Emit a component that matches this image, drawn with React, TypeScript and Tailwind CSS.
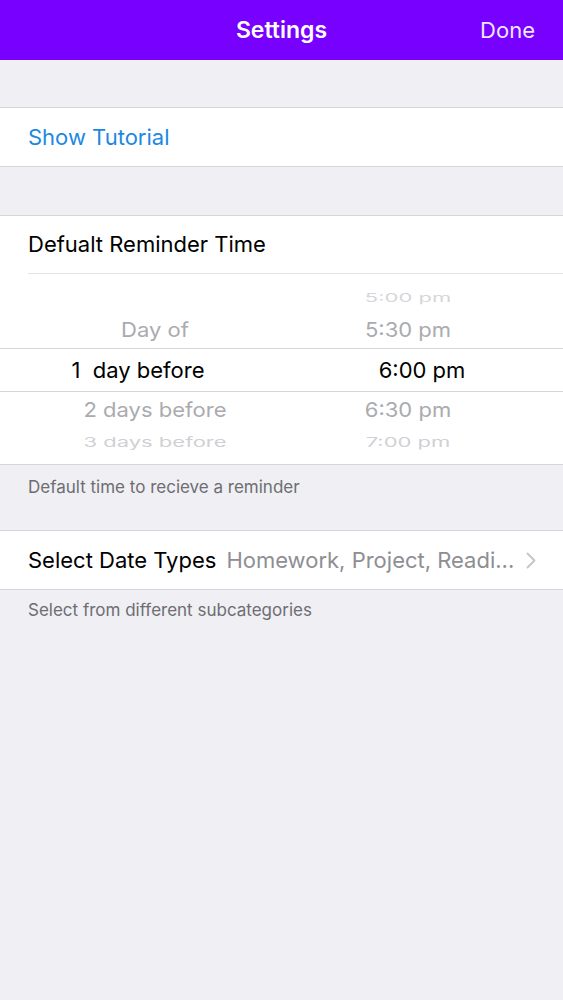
import React from 'react';

const font = { fontFamily: 'Inter, "Noto Sans", sans-serif' };

function Chevron() {
  return (
    <svg width="10" height="17" viewBox="0 0 10 17" fill="none">
      <polyline points="1.5,1.5 8.5,8.5 1.5,15.5" stroke="#c4c4c9" strokeWidth="1.8" strokeLinecap="round" strokeLinejoin="round" />
    </svg>
  );
}

export default function App() {
  return (
    <main className="min-h-screen bg-[#efeff4] flex flex-col" style={font}>
      {/* Nav bar */}
      <header className="h-[60px] bg-[#7800ff] flex items-center relative">
        <h1 className="flex-1 text-center text-white text-[23px] font-semibold">Settings</h1>
        <span className="absolute right-[28px] text-[#f1e6ff] text-[22px]">Done</span>
      </header>

      <div className="h-[47px]" />

      {/* Tutorial */}
      <div className="bg-white border-y border-[#d6d6da] h-[60px] flex items-center px-[28px]">
        <span className="text-[22px] text-[#1c88e2]">Show Tutorial</span>
      </div>

      <div className="h-[48px]" />

      {/* Reminder picker */}
      <div className="bg-white border-y border-[#d6d6da]">
        <div className="h-[58px] flex items-center ml-[28px] border-b border-[#e3e3e6]">
          <span className="text-[22px] text-black">Defualt Reminder Time</span>
        </div>
        <div className="h-[190px] flex flex-col pt-[12px] text-[22px]">
          <div className="h-[26px] overflow-hidden">
            <div className="h-[30px] flex items-center text-[#d6d6da] scale-y-[0.55] mt-[-3px]">
              <span className="w-[310px] text-center" />
              <span className="w-[196px] text-center">5:00 pm</span>
            </div>
          </div>
          <div className="h-[36px] flex items-center text-[#ababaf] scale-y-[0.92]">
            <span className="w-[310px] text-center">Day of</span>
            <span className="w-[196px] text-center">5:30 pm</span>
          </div>
          <div className="h-[44px] flex items-center border-y border-[#d6d6da] text-black text-[22px]">
            <span className="w-[310px] text-center pr-[34px] whitespace-pre">1  day before</span>
            <span className="w-[196px] text-center pl-[28px]">6:00 pm</span>
          </div>
          <div className="h-[36px] flex items-center text-[#ababaf] scale-y-[0.92]">
            <span className="w-[310px] text-center">2 days before</span>
            <span className="w-[196px] text-center">6:30 pm</span>
          </div>
          <div className="h-[22px] overflow-hidden">
            <div className="h-[30px] flex items-center text-[#d0d0d4] scale-y-[0.6] mt-[-1px]">
              <span className="w-[310px] text-center">3 days before</span>
              <span className="w-[196px] text-center">7:00 pm</span>
            </div>
          </div>
        </div>
      </div>

      <p className="px-[28px] pt-[10px] h-[65px] text-[17px] text-[#6d6d72]">Default time to recieve a reminder</p>

      {/* Date types */}
      <div className="bg-white border-y border-[#d6d6da] h-[60px] flex items-center pl-[28px] pr-[27px] gap-[10px]">
        <span className="text-[22px] text-black shrink-0">Select Date Types</span>
        <span className="flex-1 min-w-0 truncate text-[22px] text-[#8e8e93]">Homework, Project, Readi...</span>
        <Chevron />
      </div>

      <p className="px-[28px] pt-[8px] text-[17px] text-[#6d6d72]">Select from different subcategories</p>
    </main>
  );
}
